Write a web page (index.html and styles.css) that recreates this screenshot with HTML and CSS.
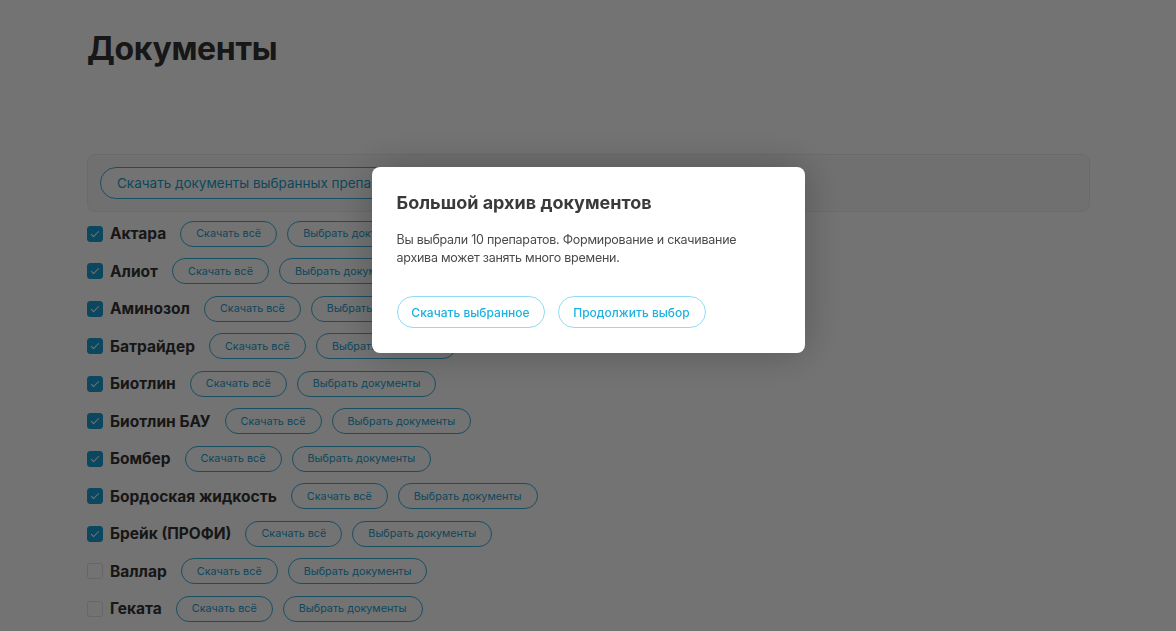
FILE: index.html
```html
<!DOCTYPE html>
<html lang="ru">
<head>
  <meta charset="utf-8">
  <link rel="stylesheet" href="styles.css">
  <title>Документы</title>
</head>
<body>
  <div class="page">
    <h1 class="page-title">Документы</h1>

    <div class="toolbar">
      <button class="btn btn-large">Скачать документы выбранных препаратов</button>
    </div>

    <ul class="drug-list">
      <li class="drug-row">
        <span class="check checked"></span>
        <span class="drug-name">Актара</span>
        <button class="btn btn-small">Скачать всё</button>
        <button class="btn btn-small">Выбрать документы</button>
      </li>
      <li class="drug-row">
        <span class="check checked"></span>
        <span class="drug-name">Алиот</span>
        <button class="btn btn-small">Скачать всё</button>
        <button class="btn btn-small">Выбрать документы</button>
      </li>
      <li class="drug-row">
        <span class="check checked"></span>
        <span class="drug-name">Аминозол</span>
        <button class="btn btn-small">Скачать всё</button>
        <button class="btn btn-small">Выбрать документы</button>
      </li>
      <li class="drug-row">
        <span class="check checked"></span>
        <span class="drug-name">Батрайдер</span>
        <button class="btn btn-small">Скачать всё</button>
        <button class="btn btn-small">Выбрать документы</button>
      </li>
      <li class="drug-row">
        <span class="check checked"></span>
        <span class="drug-name">Биотлин</span>
        <button class="btn btn-small">Скачать всё</button>
        <button class="btn btn-small">Выбрать документы</button>
      </li>
      <li class="drug-row">
        <span class="check checked"></span>
        <span class="drug-name">Биотлин БАУ</span>
        <button class="btn btn-small">Скачать всё</button>
        <button class="btn btn-small">Выбрать документы</button>
      </li>
      <li class="drug-row">
        <span class="check checked"></span>
        <span class="drug-name">Бомбер</span>
        <button class="btn btn-small">Скачать всё</button>
        <button class="btn btn-small">Выбрать документы</button>
      </li>
      <li class="drug-row">
        <span class="check checked"></span>
        <span class="drug-name">Бордоская жидкость</span>
        <button class="btn btn-small">Скачать всё</button>
        <button class="btn btn-small">Выбрать документы</button>
      </li>
      <li class="drug-row">
        <span class="check checked"></span>
        <span class="drug-name">Брейк (ПРОФИ)</span>
        <button class="btn btn-small">Скачать всё</button>
        <button class="btn btn-small">Выбрать документы</button>
      </li>
      <li class="drug-row">
        <span class="check"></span>
        <span class="drug-name">Валлар</span>
        <button class="btn btn-small">Скачать всё</button>
        <button class="btn btn-small">Выбрать документы</button>
      </li>
      <li class="drug-row">
        <span class="check"></span>
        <span class="drug-name">Геката</span>
        <button class="btn btn-small">Скачать всё</button>
        <button class="btn btn-small">Выбрать документы</button>
      </li>
    </ul>
  </div>

  <!-- confirm dialog for big archives -->
  <div class="overlay">
    <div class="modal">
      <h2 class="modal-title">Большой архив документов</h2>
      <p class="modal-text">Вы выбрали 10 препаратов. Формирование и скачивание архива может занять много времени.</p>
      <div class="modal-buttons">
        <button class="btn btn-modal">Скачать выбранное</button>
        <button class="btn btn-modal">Продолжить выбор</button>
      </div>
    </div>
  </div>
</body>
</html>
```

FILE: styles.css
```css
body {
  margin: 0;
  font-family: Inter, "Noto Sans", Arial, sans-serif;
  background-color: #fff;
  color: #333;
  height: 631px;
  overflow: hidden;
}

.page {
  padding: 0 86px 0 87px;
}

.page-title {
  margin: 0;
  padding-top: 27px;
  font-size: 32px;
  font-weight: 700;
  letter-spacing: -0.3px;
  line-height: 43px;
  color: #333;
}

.toolbar {
  margin-top: 84px;
  padding: 12px 12px;
  background-color: #f8f8f8;
  border: 1px solid #ececec;
  border-radius: 8px;
}

.btn {
  font-family: inherit;
  background: #fff;
  color: #1c9fcd;
  border: 1px solid #3bb0da;
  border-radius: 20px;
  cursor: pointer;
}

.btn-large {
  height: 32px;
  padding: 0 16px;
  font-size: 13.5px;
}

.drug-list {
  list-style: none;
  margin: 0;
  padding: 3px 0 0 0;
}

.drug-row {
  display: flex;
  align-items: center;
  height: 37.5px;
}

.check {
  width: 16px;
  height: 16px;
  box-sizing: border-box;
  border: 1px solid #e2e2e2;
  border-radius: 3px;
  background: #fff;
  margin-right: 7px;
  flex-shrink: 0;
  position: relative;
}

.check.checked {
  background: #1a9dd0;
  border-color: #1a9dd0;
}

.check.checked::after {
  content: "";
  position: absolute;
  left: 5px;
  top: 2px;
  width: 3px;
  height: 7px;
  border: solid #fff;
  border-width: 0 1.5px 1.5px 0;
  transform: rotate(45deg);
}

.drug-name {
  font-size: 15.5px;
  font-weight: 700;
  color: #333;
  margin-right: 14px;
}

.btn-small {
  height: 26px;
  padding: 0 15px;
  font-size: 10.8px;
  margin-right: 10px;
}

/* dark layer with the dialog */
.overlay {
  position: fixed;
  top: 0;
  left: 0;
  right: 0;
  bottom: 0;
  background: rgba(0, 0, 0, 0.55);
  display: flex;
  justify-content: center;
  align-items: flex-start;
  padding-top: 167px;
}

.modal {
  width: 433px;
  height: 186px;
  box-sizing: border-box;
  padding: 24px 25px;
  background: #fff;
  border-radius: 8px;
  box-shadow: 0 0 40px rgba(0, 0, 0, 0.25);
}

.modal-title {
  margin: 0;
  font-size: 18px;
  font-weight: 700;
  color: #3a3a3a;
  line-height: 24px;
}

.modal-text {
  max-width: 350px;
  margin: 16px 0 0 0;
  font-size: 12.5px;
  letter-spacing: -0.25px;
  line-height: 18px;
  color: #4a4a4a;
}

.modal-buttons {
  display: flex;
  gap: 13px;
  margin-top: 29px;
}

.btn-modal {
  width: 148px;
  height: 32px;
  font-size: 12px;
  font-weight: 500;
  color: #1cb1e2;
  border-color: #8fdcf4;
  padding: 0;
}
```
